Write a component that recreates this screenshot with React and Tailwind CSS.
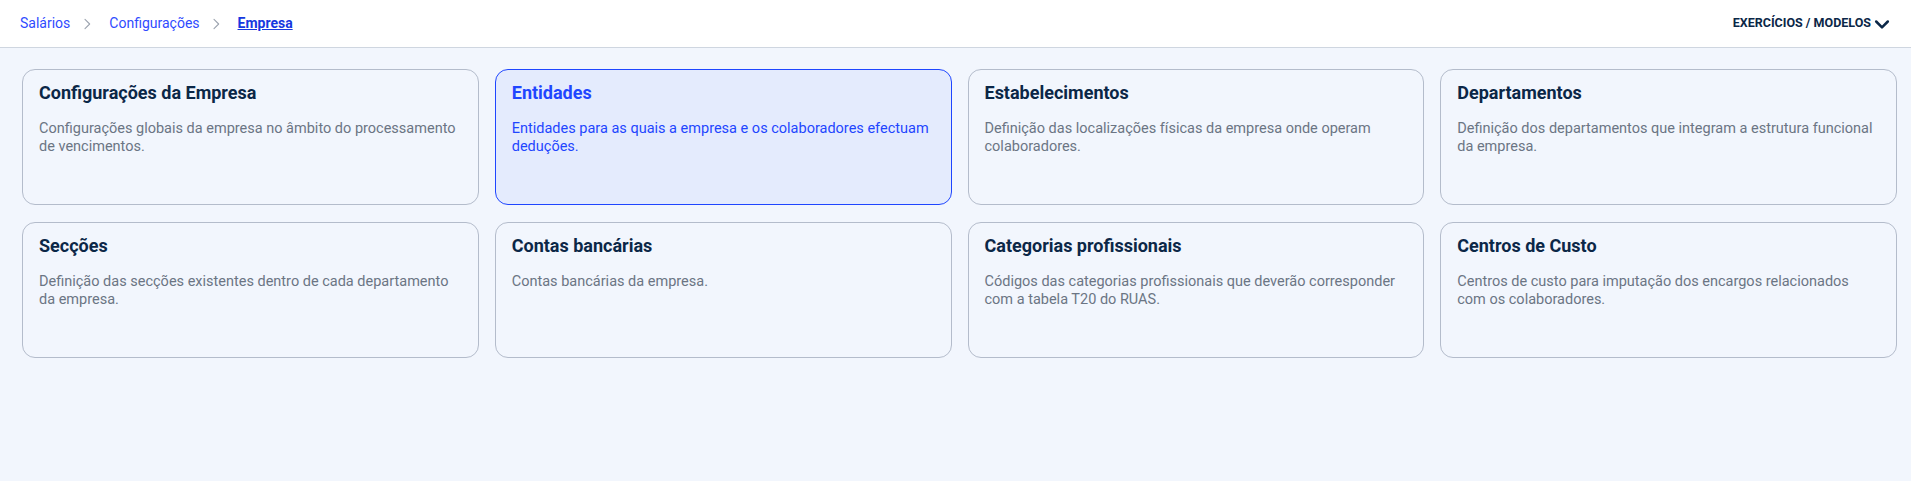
import React from "react";

const cards = [
  { title: "Configurações da Empresa", desc: "Configurações globais da empresa no âmbito do processamento de vencimentos." },
  { title: "Entidades", desc: "Entidades para as quais a empresa e os colaboradores efectuam deduções.", active: true },
  { title: "Estabelecimentos", desc: "Definição das localizações físicas da empresa onde operam colaboradores." },
  { title: "Departamentos", desc: "Definição dos departamentos que integram a estrutura funcional da empresa." },
  { title: "Secções", desc: "Definição das secções existentes dentro de cada departamento da empresa." },
  { title: "Contas bancárias", desc: "Contas bancárias da empresa." },
  { title: "Categorias profissionais", desc: "Códigos das categorias profissionais que deverão corresponder com a tabela T20 do RUAS." },
  { title: "Centros de Custo", desc: "Centros de custo para imputação dos encargos relacionados com os colaboradores." },
];

function Chevron() {
  return (
    <svg width="16" height="16" viewBox="0 0 24 24" fill="none" stroke="#9ca3af" strokeWidth="1.6" strokeLinecap="round" strokeLinejoin="round">
      <path d="M9 5l7 7-7 7" />
    </svg>
  );
}

export default function App() {
  return (
    <div className="min-h-screen bg-[#f2f6fd]" style={{ fontFamily: "Roboto, 'Liberation Sans', sans-serif" }}>
      <header className="h-[48px] bg-white border-b border-[#cfd6e0] flex items-center justify-between pl-[20px] pr-[19px]">
        <nav className="flex items-center text-[14px] text-[#2f4bff]">
          <span>Salários</span>
          <span className="ml-[9px] mr-[14px] flex items-center"><Chevron /></span>
          <span>Configurações</span>
          <span className="ml-[8px] mr-[14px] flex items-center"><Chevron /></span>
          <span className="font-bold underline text-[#1638e0]">Empresa</span>
        </nav>
        <button className="flex items-center gap-[1px] text-[12.5px] font-bold text-[#0b2747]">
          EXERCÍCIOS / MODELOS
          <svg width="20" height="20" viewBox="0 0 24 24" fill="none" stroke="#0b2747" strokeWidth="3" strokeLinecap="round" strokeLinejoin="round">
            <path d="M5 9l7 7 7-7" />
          </svg>
        </button>
      </header>
      <main className="grid grid-cols-4 gap-x-[16px] gap-y-[17px] pl-[22px] pr-[14px] pt-[21px]">
        {cards.map((c) => (
          <div
            key={c.title}
            className={
              c.active
                ? "h-[136px] rounded-[13px] border border-[#1f46ff] bg-[#e4ebfd] px-[16px] pt-[12px]"
                : "h-[136px] rounded-[13px] border border-[#b4bccb] bg-[#f2f6fd] px-[16px] pt-[12px]"
            }
          >
            <div className={c.active ? "text-[18px] leading-[21.6px] font-bold text-[#1f46ff]" : "text-[18px] leading-[21.6px] font-bold text-[#0b2747]"}>
              {c.title}
            </div>
            <p className={c.active ? "mt-[16px] text-[14.5px] leading-[18px] text-[#1f46ff]" : "mt-[16px] text-[14.5px] leading-[18px] text-[#6b7584]"}>
              {c.desc}
            </p>
          </div>
        ))}
      </main>
    </div>
  );
}
